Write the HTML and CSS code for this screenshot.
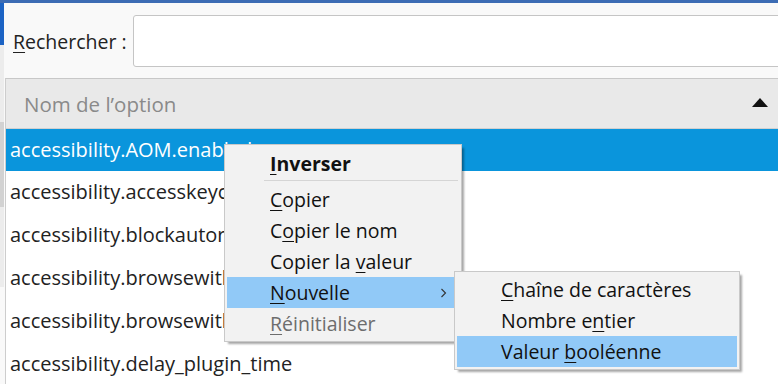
FILE: index.html
```html
<!DOCTYPE html>
<html lang="fr">
<head>
	<meta charset="UTF-8">
	<title>about:config</title>
	<link rel="stylesheet" href="styles.css">
</head>
<body>
	<div class="topline"></div>
	<div class="window">
		<div class="edge">
			<div class="edge_blue"></div>
			<div class="edge_track"><div class="edge_thumb"></div></div>
		</div>
		<div class="content">
			<div class="search">
				<label class="search_label"><u>R</u>echercher :</label>
				<div class="search_box"></div>
			</div>
			<div class="table">
				<div class="table_head">
					<span>Nom de l’option</span>
					<span class="sort"></span>
				</div>
				<div class="row selected">accessibility.AOM.enabled</div>
				<div class="row">accessibility.accesskeycausesactivation</div>
				<div class="row">accessibility.blockautorefresh</div>
				<div class="row">accessibility.browsewithcaret</div>
				<div class="row">accessibility.browsewithcaret_shortcut.enabled</div>
				<div class="row">accessibility.delay_plugin_time</div>
			</div>
		</div>
	</div>

	<div class="menu main_menu">
		<div class="item bold"><span><u>I</u>nverser</span></div>
		<div class="sep"></div>
		<div class="item"><span><u>C</u>opier</span></div>
		<div class="item"><span>C<u>o</u>pier le nom</span></div>
		<div class="item"><span>Copier la <u>v</u>aleur</span></div>
		<div class="item active">
			<span><u>N</u>ouvelle</span>
			<svg class="arrow" width="7" height="10" viewBox="0 0 7 10"><polyline points="1.5,1 5.5,5 1.5,9" fill="none" stroke="#333" stroke-width="1.1"/></svg>
		</div>
		<div class="item disabled"><span><u>R</u>éinitialiser</span></div>
	</div>

	<div class="menu sub_menu">
		<div class="item"><span><u>C</u>haîne de caractères</span></div>
		<div class="item"><span>Nombre e<u>n</u>tier</span></div>
		<div class="item active"><span>Valeur <u>b</u>ooléenne</span></div>
	</div>
</body>
</html>
```

FILE: styles.css
```css
body{
	margin: 0;
	width: 778px;
	height: 384px;
	overflow: hidden;
	position: relative;
	background: #f9f9f9;
	font-family: "Open Sans", "Noto Sans", sans-serif;
	color: #1e1e1e;
}
u{
	text-decoration-thickness: 1px;
	text-underline-offset: 3px;
}
.topline{
	height: 3px;
	background: #3c6cb4;
}
.window{
	display: flex;
	height: 381px;
}
.edge{
	width: 4px;
	display: flex;
	flex-direction: column;
}
.edge_blue{
	height: 42px;
	background: #1c63c4;
}
.edge_track{
	height: 165px;
	background: #ececec;
	padding-top: 77px;
}
.edge_thumb{
	height: 85px;
	background: #d2d2d2;
}
.content{
	flex: 1;
	padding-left: 1px;
	min-width: 0;
}
.search{
	display: flex;
	align-items: center;
	height: 52px;
	padding: 12px 0 11px 8px;
}
.search_label{
	font-size: 19.5px;
	color: #222;
	margin-right: 6px;
	white-space: nowrap;
}
.search_box{
	flex: 1;
	height: 50px;
	margin-right: -10px;
	background: #fff;
	border: 1px solid #c5c5c5;
	border-radius: 3px;
}
.table{
	border-top: 1px solid #c8c8c8;
	border-left: 1px solid #cdcdcd;
}
.table_head{
	height: 49px;
	display: flex;
	align-items: center;
	justify-content: space-between;
	padding: 0 10px 0 18px;
	background: #e9e9e9;
	border-bottom: 1px solid #d0d0d0;
	color: #8a8a8a;
	font-size: 20.5px;
}
.sort{
	width: 0;
	height: 0;
	border-left: 8px solid transparent;
	border-right: 8px solid transparent;
	border-bottom: 9px solid #111;
	margin-top: -2px;
}
.row{
	height: 43px;
	line-height: 42px;
	padding-left: 4px;
	font-size: 20px;
	color: #222;
	white-space: nowrap;
	background: #fff;
}
.row.selected{
	height: 42px;
	background: #0a95dc;
	color: #fff;
}

/* menus */
.menu{
	position: absolute;
	background: #f2f2f2;
	border: 1px solid #c9c9c9;
	box-shadow: 3px 3px 2px -1px rgba(0,0,0,.35);
	font-size: 19.5px;
	color: #111;
}
.main_menu{
	left: 224px;
	top: 144px;
	width: 236px;
	padding: 3px 0 2px;
}
.sub_menu{
	left: 454px;
	top: 271px;
	width: 284px;
	padding: 2px 0 2px;
}
.item{
	height: 31px;
	margin: 0 2px;
	padding-left: 43px;
	display: flex;
	align-items: center;
	justify-content: space-between;
	white-space: nowrap;
}
.sub_menu .item{
	padding-left: 44px;
}
.item.bold{
	font-weight: bold;
}
.item.active{
	background: #91c9f7;
}
.item.disabled{
	color: #6d6d6d;
}
.arrow{
	margin-right: 12px;
}
.sep{
	height: 1px;
	background: #d5d5d5;
	margin: 1px 3px 3px 39px;
}
```
